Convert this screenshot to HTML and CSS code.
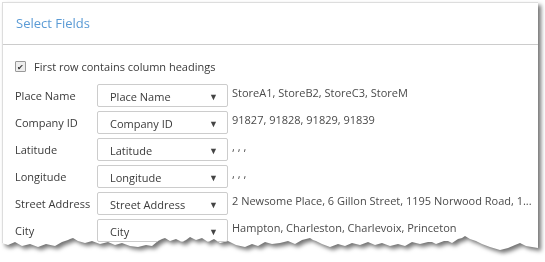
FILE: index.html
```html
<html>

<head>
    <link rel="stylesheet" href="styles.css">
    <title>Select Fields</title>
</head>

<body>
    <div class="shadow">
        <div class="panel">
            <div class="header">Select Fields</div>
            <div class="content">
                <label class="first-row">
                    <span class="check">&#10004;</span>
                    <span>First row contains column headings</span>
                </label>

                <div class="fields">
                    <div class="label">Place Name</div>
                    <div class="picker"><span>Place Name</span><span class="arrow">&#9660;</span></div>
                    <div class="sample">StoreA1, StoreB2, StoreC3, StoreM</div>

                    <div class="label">Company ID</div>
                    <div class="picker"><span>Company ID</span><span class="arrow">&#9660;</span></div>
                    <div class="sample">91827, 91828, 91829, 91839</div>

                    <div class="label">Latitude</div>
                    <div class="picker"><span>Latitude</span><span class="arrow">&#9660;</span></div>
                    <div class="sample">, , ,</div>

                    <div class="label">Longitude</div>
                    <div class="picker"><span>Longitude</span><span class="arrow">&#9660;</span></div>
                    <div class="sample">, , ,</div>

                    <div class="label">Street Address</div>
                    <div class="picker"><span>Street Address</span><span class="arrow">&#9660;</span></div>
                    <div class="sample">2 Newsome Place, 6 Gillon Street, 1195 Norwood Road, 1...</div>

                    <div class="label">City</div>
                    <div class="picker"><span>City</span><span class="arrow">&#9660;</span></div>
                    <div class="sample">Hampton, Charleston, Charlevoix, Princeton</div>
                </div>
            </div>
        </div>
    </div>
</body>

</html>
```

FILE: styles.css
```css
body {
    margin: 0;
    padding: 2px 0 0 2px;
    background: #fff;
    font-family: "Open Sans", sans-serif;
    font-size: 11px;
    color: #3a3a3a;
}

.shadow {
    width: 536px;
    filter: drop-shadow(3px 3px 2px rgba(0, 0, 0, 0.55));
}

.panel {
    height: 250px;
    background: #fff;
    border-top: 1px solid #ddd;
    border-left: 1px solid #ddd;
    box-sizing: border-box;
    overflow: hidden;
    clip-path: polygon(0px 0px, 536px 0px, 536px 246px,
        530px 245px, 524px 244px, 518px 241px, 513px 243px, 506px 246px, 498px 248px,
        488px 245px, 480px 242px, 474px 239px, 468px 237px, 463px 234px, 460px 236px,
        456px 237px, 450px 241px, 446px 239px, 442px 239px, 434px 242px, 430px 240px,
        426px 240px, 418px 242px, 414px 241px, 410px 240px, 403px 244px, 396px 242px,
        392px 243px, 388px 244px, 380px 241px, 373px 243px, 366px 240px, 358px 243px,
        350px 241px, 343px 244px, 336px 242px, 328px 245px, 320px 242px, 314px 239px,
        311px 238px, 308px 236px, 304px 237px, 300px 238px, 293px 242px, 286px 239px,
        278px 241px, 270px 242px, 263px 240px, 256px 244px, 250px 242px, 243px 245px,
        234px 243px, 226px 239px, 218px 241px, 212px 237px, 206px 240px, 200px 236px,
        194px 238px, 188px 235px, 184px 238px, 180px 240px, 174px 237px, 168px 239px,
        163px 236px, 160px 237px, 156px 239px, 150px 244px, 144px 243px, 136px 245px,
        128px 244px, 120px 241px, 113px 243px, 106px 240px, 98px 242px, 90px 239px,
        83px 241px, 76px 239px, 71px 236px, 68px 237px, 66px 238px, 60px 240px,
        53px 244px, 44px 242px, 36px 245px, 28px 242px, 20px 244px, 13px 240px,
        6px 243px, 0px 241px);
}

.header {
    height: 41px;
    line-height: 40px;
    padding-left: 13px;
    font-size: 13px;
    color: #5b9bd5;
    border-bottom: 1px solid #ccc;
}

.content {
    padding: 12px 0 0 12px;
}

.first-row {
    display: flex;
    align-items: center;
    gap: 8px;
    height: 18px;
}

.check {
    width: 9px;
    height: 9px;
    border: 1px solid #999;
    border-radius: 1px;
    background: #eee;
    font-size: 8px;
    line-height: 9px;
    text-align: center;
    color: #333;
}

.fields {
    display: grid;
    grid-template-columns: 82px 131px 1fr;
    grid-auto-rows: 23px;
    row-gap: 4px;
    margin-top: 9px;
}

.label {
    display: flex;
    align-items: center;
    white-space: nowrap;
}

.picker {
    display: flex;
    align-items: center;
    justify-content: space-between;
    padding: 1px 9px 0 12px;
    border: 1px solid #ccc;
    border-radius: 2px;
    box-sizing: border-box;
}

.arrow {
    font-size: 9px;
    color: #444;
}

.sample {
    padding: 1px 0 0 4px;
    color: #4a4a4a;
    white-space: nowrap;
}
```
